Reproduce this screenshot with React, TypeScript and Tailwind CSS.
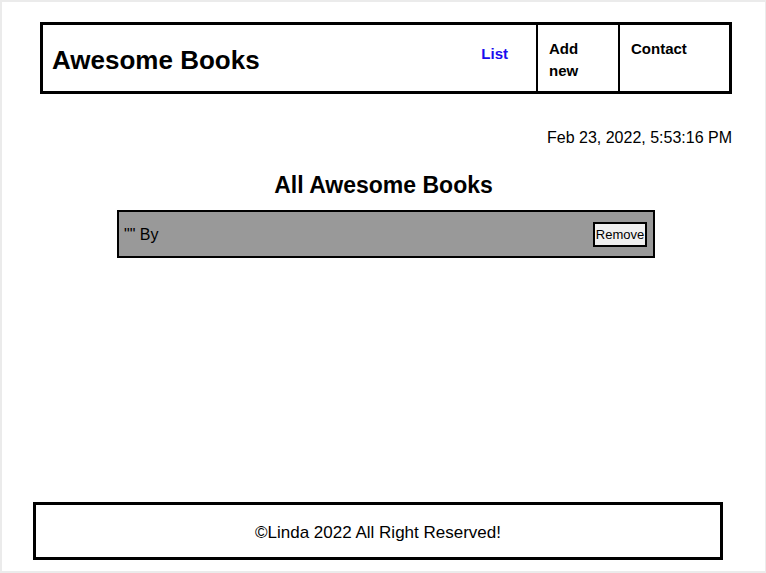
import React from "react";

export default function App() {
  const font = { fontFamily: '"Comic Sans MS", "Liberation Sans", Arial, sans-serif' };
  return (
    <div
      className="w-[766px] h-[573px] bg-white border-t-2 border-l-2 border-b-2 border-r border-[#ebebeb] flex flex-col text-black"
      style={font}
    >
      <header className="mt-[20px] ml-[38px] w-[692px] h-[72px] border-[3px] border-black flex">
        <div className="flex-1 flex items-center justify-between pl-[9px] pr-[28px]">
          <h1 className="text-[26px] font-bold leading-none mt-[3px]">Awesome Books</h1>
          <a className="text-[15px] font-bold text-[#1a0dee] self-start mt-[20px] leading-[18px]">List</a>
        </div>
        <div className="w-[82px] border-l-2 border-black pl-[11px] pt-[13px] text-[15px] font-bold leading-[22px]">
          Add<br />new
        </div>
        <div className="w-[111px] border-l-2 border-black pl-[11px] pt-[13px] text-[15px] font-bold leading-[22px]">
          Contact
        </div>
      </header>

      <div className="mt-[32px] pr-[33px] text-right text-[16px] leading-[24px]">
        Feb 23, 2022, 5:53:16 PM
      </div>

      <h2 className="mt-[20px] text-center text-[23px] font-bold leading-[30px]">All Awesome Books</h2>

      <div className="mt-[10px] ml-[115px] w-[538px] h-[48px] bg-[#999999] border-2 border-black flex items-center justify-between pl-[5px] pr-[6px]">
        <span className="text-[16px] mt-[1px]">"" By</span>
        <button className="w-[54px] h-[25px] bg-[#f0f0f0] border-2 border-black text-[13px] leading-none flex items-center justify-center">
          Remove
        </button>
      </div>

      <footer className="mt-auto mb-[11px] ml-[31px] w-[690px] h-[58px] border-[3px] border-black flex items-center justify-center text-[17px] pt-[3px]">
        ©Linda 2022 All Right Reserved!
      </footer>
    </div>
  );
}
